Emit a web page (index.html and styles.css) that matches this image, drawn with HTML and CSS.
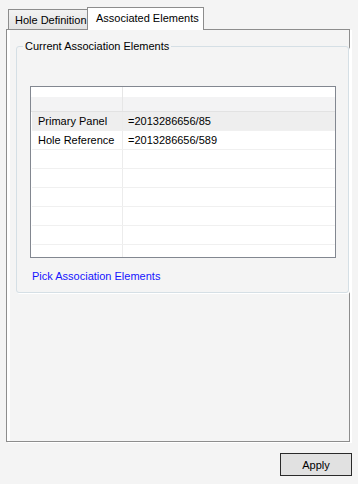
FILE: index.html
```html
<!DOCTYPE html>
<html lang="en">
<head>
  <meta charset="UTF-8" />
  <title>Associated Elements</title>
  <link rel="stylesheet" href="styles.css">
</head>
<body>
  <div class="tabs">
    <div class="tab">Hole Definition</div>
    <div class="tab active">Associated Elements</div>
  </div>
  <div class="panel">
    <fieldset class="group">
      <legend>Current Association Elements</legend>
      <div class="grid">
        <div class="grid-head">
          <div class="cell c1"></div>
          <div class="cell c2"></div>
        </div>
        <div class="row selected">
          <div class="cell c1">Primary Panel</div>
          <div class="cell c2">=2013286656/85</div>
        </div>
        <div class="row">
          <div class="cell c1">Hole Reference</div>
          <div class="cell c2">=2013286656/589</div>
        </div>
        <div class="row"><div class="cell c1"></div><div class="cell c2"></div></div>
        <div class="row"><div class="cell c1"></div><div class="cell c2"></div></div>
        <div class="row"><div class="cell c1"></div><div class="cell c2"></div></div>
        <div class="row"><div class="cell c1"></div><div class="cell c2"></div></div>
        <div class="row"><div class="cell c1"></div><div class="cell c2"></div></div>
        <div class="row"><div class="cell c1"></div><div class="cell c2"></div></div>
      </div>
      <a class="pick" href="#">Pick Association Elements</a>
    </fieldset>
  </div>
  <button class="apply">Apply</button>
</body>
</html>
```

FILE: styles.css
```css
html, body {
  margin: 0;
  padding: 0;
}
body {
  width: 358px;
  height: 484px;
  background: #f4f4f4;
  font-family: "Liberation Sans", Arial, sans-serif;
  font-size: 11px;
  color: #000;
  overflow: hidden;
}
.tabs {
  display: flex;
  align-items: flex-end;
  height: 22px;
  padding: 7px 0 0 8px;
}
.tab {
  box-sizing: border-box;
  height: 20px;
  width: 80px;
  padding: 4px 0 0 6px;
  border: 1px solid #8d8d8d;
  border-bottom: none;
  background: linear-gradient(#f2f2f2, #e3e3e3);
}
.tab.active {
  position: relative;
  z-index: 1;
  width: 117px;
  height: 23px;
  margin-left: -1px;
  margin-bottom: -1px;
  padding: 4px 0 0 8px;
  background: #fff;
}
.panel {
  box-sizing: border-box;
  width: 344px;
  height: 413px;
  margin-left: 6px;
  border: 1px solid #8d8d8d;
  background: #f4f4f4;
  box-shadow: inset 3px 0 0 #fff, 2px 1px 0 #fff;
}
.group {
  box-sizing: border-box;
  width: 326px;
  margin: 10px 0 0 9px;
  padding: 0 12px 9px 13px;
  border: 1px solid #d5dfe5;
  border-radius: 3px;
  box-shadow: 1px 1px 0 #fff;
}
.group legend {
  margin-left: -7px;
  padding: 0 2px;
  line-height: 13px;
}
.grid {
  box-sizing: border-box;
  width: 306px;
  height: 172px;
  margin-top: 33px;
  border: 1px solid #828790;
  background: #fff;
  overflow: hidden;
}
.grid-head {
  display: flex;
  height: 24px;
  border-bottom: 1px solid #e2e2e2;
  background: linear-gradient(#fff 0 42%, #f3f3f4 42%);
}
.row {
  display: flex;
  height: 18px;
  border-bottom: 1px solid #f0f0f0;
  margin-left: 1px;
}
.row.selected {
  background: #eeeeee;
}
.cell {
  box-sizing: border-box;
  line-height: 18px;
  white-space: nowrap;
}
.c1 {
  width: 91px;
  padding-left: 6px;
  border-right: 1px solid #ececec;
}
.grid-head .c1 {
  width: 92px;
  border-right-color: #e6e6e6;
}
.c2 {
  flex: 1;
  padding-left: 5px;
}
.pick {
  display: block;
  margin: 12px 0 0 2px;
  line-height: 13px;
  color: #1414ff;
  text-decoration: none;
}
.apply {
  display: block;
  box-sizing: border-box;
  width: 72px;
  height: 23px;
  margin: 11px 0 0 280px;
  padding: 0;
  border: 1px solid #2a2a2a;
  background: #e1e1e1;
  font-family: "Liberation Sans", Arial, sans-serif;
  font-size: 11px;
  color: #000;
}
```
